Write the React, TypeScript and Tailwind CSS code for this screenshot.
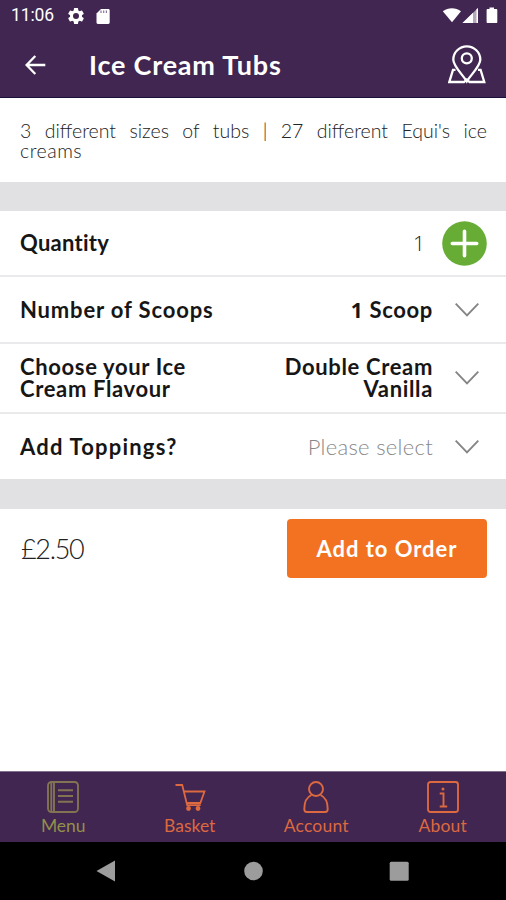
import React from 'react';

interface OptionRowProps {
  label: React.ReactNode;
  value: React.ReactNode;
  className: string;
  valueClassName?: string;
}

const Chevron: React.FC = () => (
  <svg width="24" height="14" viewBox="0 0 24 14" fill="none" stroke="#858585" strokeWidth="1.9">
    <path d="M.7.7 12 12.3 23.3.7" />
  </svg>
);

const OptionRow: React.FC<OptionRowProps> = ({ label, value, className, valueClassName = 'font-bold tracking-[0.65px]' }) => (
  <div className={`flex items-center border-[#eaeaec] pl-5 pr-[27px] text-[22px] leading-[22px] ${className}`}>
    <div className="font-bold">{label}</div>
    <div className={`ml-auto mr-[22px] text-right ${valueClassName}`}>{value}</div>
    <Chevron />
  </div>
);

const StatusBar: React.FC = () => (
  <div className="flex h-8 items-center pl-[11px] pr-[8px] text-white">
    <span className="font-[Roboto] text-[17.5px] leading-none tracking-[-0.1px]">11:06</span>
    <svg className="ml-[12px]" width="20" height="20" viewBox="0 0 24 24" fill="currentColor">
      <path d="M19.14 12.94c.04-.3.06-.61.06-.94 0-.32-.02-.64-.07-.94l2.03-1.58a.49.49 0 0 0 .12-.61l-1.92-3.32a.49.49 0 0 0-.59-.22l-2.39.96a7 7 0 0 0-1.62-.94l-.36-2.54a.48.48 0 0 0-.48-.41h-3.84a.48.48 0 0 0-.47.41l-.36 2.54c-.59.24-1.13.57-1.62.94l-2.39-.96a.48.48 0 0 0-.59.22L2.74 8.87a.48.48 0 0 0 .12.61l2.03 1.58a7.4 7.4 0 0 0 0 1.88l-2.03 1.58a.49.49 0 0 0-.12.61l1.92 3.32c.12.22.37.29.59.22l2.39-.96c.5.38 1.03.7 1.62.94l.36 2.54c.05.24.24.41.48.41h3.84c.24 0 .44-.17.47-.41l.36-2.54a7 7 0 0 0 1.62-.94l2.39.96c.22.08.47 0 .59-.22l1.92-3.32a.48.48 0 0 0-.12-.61zM12 15.6a3.6 3.6 0 1 1 0-7.2 3.6 3.6 0 0 1 0 7.2" />
    </svg>
    <svg className="ml-[10px]" width="14" height="17" viewBox="0 0 14 17">
      <path d="M5 1h7.3c.8 0 1.4.6 1.4 1.4v12.2c0 .8-.6 1.4-1.4 1.4H1.9c-.8 0-1.4-.6-1.4-1.4V5.5z" fill="#fff" />
      <path d="M5 2.4v2.5M7.7 2.4v2.5M10.4 2.4v2.5" stroke="#887799" strokeWidth="1.2" />
    </svg>
    <svg className="ml-auto" width="56" height="18" viewBox="0 0 56 18" fill="#fff">
      <path d="M.8 4.3C6 .2 13.8.2 19 4.3L10 15.3z" />
      <path d="M20.5 16 36 1v15z" opacity=".6" />
      <path d="M20.5 16 31 5.8V16z" />
      <path d="M34.5 2.4 36 1v15h-1.5z" />
      <path d="M47.5.4H52v1.700h2.500c.5 0 .8.3.8.8v12.400c0 .5-.3.8-.8.8H45.400c-.5 0-.8-.3-.8-.8V2.900c0-.5.3-.8.8-.8h2.100z" />
    </svg>
  </div>
);

const Header: React.FC = () => (
  <header className="h-[98px] border-b border-[#17103a] bg-[#402650]">
    <StatusBar />
    <div className="flex h-[65px] items-center pl-[25px] pr-[20px] text-white">
      <svg width="21" height="20" viewBox="0 0 21 20" fill="none" stroke="currentColor" strokeWidth="2.3">
        <path d="M20.3 10H2M10.3 1 1.6 10l8.7 9" />
      </svg>
      <h1 className="ml-[43px] text-[27px] font-bold leading-none tracking-[0.8px]">Ice Cream Tubs</h1>
      <svg className="ml-auto" width="38" height="39" viewBox="0 0 38 39" fill="none" stroke="currentColor" strokeWidth="2.3">
        <path d="M18.8 36.5C14.5 29.5 5.3 21 5.3 14.7a13.5 13.3 0 0 1 27 0c0 6.3-9.2 14.8-13.5 21.8z" />
        <circle cx="18.8" cy="13.3" r="5" />
        <path d="M7.500 24.800H5L1.300 37h14.700l2.800-2.500 2.800 2.500h14.700L32.600 24.800H30" />
      </svg>
    </div>
  </header>
);

const TabBar: React.FC = () => (
  <nav className="grid h-[71px] grid-cols-4 border-t border-[#80708b] bg-[#402650] text-[17.5px] leading-5 text-[#dc693f]">
    <div className="flex flex-col items-center pt-[9px] text-[#92904b]">
      <svg width="32" height="32" viewBox="0 0 32 32" fill="none" stroke="#827452" strokeWidth="1.9">
        <rect x="1" y="1" width="30" height="30" rx="3.5" />
        <path d="M4.300 1v30M7 1v30M11 9.300h15M11 15h15M11 20.700h15" />
      </svg>
      <span className="mt-[3px]">Menu</span>
    </div>
    <div className="flex flex-col items-center pt-[9px]">
      <svg width="32" height="32" viewBox="0 0 32 32" fill="none" stroke="currentColor" strokeWidth="1.8">
        <path d="M1.500 4h6.700l5 20.200h13.500M9.800 10.500h20.700L26.300 22H12.700" />
        <circle cx="14.5" cy="27.5" r="1.5" fill="currentColor" />
        <circle cx="24" cy="27.5" r="1.5" fill="currentColor" />
      </svg>
      <span className="mt-[3px]">Basket</span>
    </div>
    <div className="flex flex-col items-center pt-[9px]">
      <svg width="32" height="32" viewBox="0 0 32 32" fill="none" stroke="currentColor" strokeWidth="1.9">
        <circle cx="16" cy="8" r="7" />
        <path d="M11.500 14C7 16 4.300 21 4.300 28c0 2 .7 3 2.500 3h18.400c1.800 0 2.500-1 2.500-3 0-7-2.700-12-7.200-14" />
      </svg>
      <span className="mt-[3px] tracking-[0.2px]">Account</span>
    </div>
    <div className="flex flex-col items-center pt-[9px]">
      <svg width="32" height="32" viewBox="0 0 32 32" fill="none" stroke="currentColor" strokeWidth="1.9">
        <rect x="1" y="1" width="30" height="30" rx="2.5" />
        <path d="M12.700 12.500h3.800v13M12.700 25.500h7.500" />
        <circle cx="16" cy="8" r="1.5" fill="currentColor" stroke="none" />
      </svg>
      <span className="mt-[3px] tracking-[0.2px]">About</span>
    </div>
  </nav>
);

const App: React.FC = () => {
  return (
    <div className="flex h-[900px] w-[506px] flex-col overflow-hidden bg-white font-[Lato,sans-serif] text-[#161616]">
      <Header />

      <div className="h-[84px] pl-5 pr-[19px] pt-[23px] text-[19.5px] font-light leading-5 text-[#222]">
        <p className="[text-align-last:justify]">3 different sizes of tubs | 27 different Equi's ice</p>
        <p className="tracking-[0.5px]">creams</p>
      </div>

      <div className="h-[29px] bg-[#e1e1e3]" />

      {/* Options */}
      <div className="flex h-[66px] items-center border-b-2 border-[#eaeaec] pl-5 pr-[19px] text-[22px] leading-[22px]">
        <span className="font-bold tracking-[0.25px]">Quantity</span>
        <span className="ml-auto mr-[17px] font-['Open_Sans'] text-[21px] font-light text-[#222]">1</span>
        <svg width="45" height="45" viewBox="0 0 45 45">
          <circle cx="22.5" cy="22.5" r="22.3" fill="#67ad35" />
          <path d="M22.500 10.300v24.400M10.300 22.500h24.400" stroke="#fff" strokeWidth="3.6" strokeLinecap="round" />
        </svg>
      </div>
      <OptionRow
        className="h-[67px] border-b-2"
        label={<span className="tracking-[0.85px]">Number of Scoops</span>}
        value={<><span className="font-['Open_Sans'] text-[21px]">1</span> Scoop</>}
      />
      <OptionRow
        className="h-[70px] border-b-2"
        label={<span className="tracking-[0.65px]">Choose your Ice<br />Cream Flavour</span>}
        value={<>Double Cream<br />Vanilla</>}
      />
      <OptionRow
        className="h-[65px]"
        label={<span className="tracking-[1.2px]">Add Toppings?</span>}
        value="Please select"
        valueClassName="font-light tracking-[0.3px] text-[#888]"
      />

      <div className="h-[30px] bg-[#e1e1e3]" />

      {/* Price and order button */}
      <div className="flex flex-1 items-start justify-between pl-[21px] pr-[19px] pt-[10px]">
        <span className="text-[27px] font-light leading-[59px] tracking-[-1.3px] text-[#222]">£2.50</span>
        <button className="h-[59px] w-[200px] rounded-[4px] bg-[#f27222] text-[22px] font-bold tracking-[0.95px] text-white">
          Add to Order
        </button>
      </div>

      <TabBar />

      {/* System navigation */}
      <div className="flex h-[58px] items-center bg-black pl-[96px]">
        <svg width="314" height="22" viewBox="0 0 314 22" fill="#9c9c9c">
          <path d="M.5 11 19 .5v21z" />
          <circle cx="157.5" cy="11" r="9.3" />
          <rect x="293.7" y="1.7" width="19" height="19" rx="1.5" />
        </svg>
      </div>
    </div>
  );
};

export default App;
